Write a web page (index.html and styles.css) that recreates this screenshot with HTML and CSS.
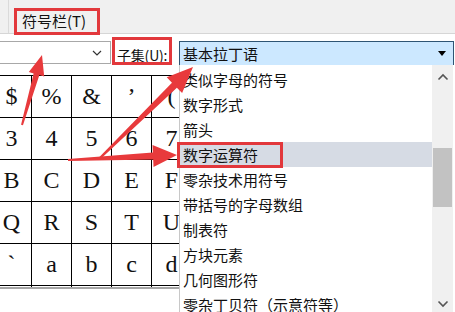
FILE: index.html
```html
<!DOCTYPE html>
<html lang="zh">
<head>
<meta charset="utf-8">
<link rel="stylesheet" href="styles.css">
</head>
<body>
<div class="page">
  <div class="tabbar">
    <div class="tab">符号栏(T)</div>
  </div>
  <div class="toolbar">
    <div class="font-select">
      <svg class="chev" width="10" height="6" viewBox="0 0 10 6"><polyline points="1,1 5,5 9,1" fill="none" stroke="#333" stroke-width="1.2"/></svg>
    </div>
    <div class="subset-label">子集(U):</div>
    <div class="subset-select">
      <span>基本拉丁语</span>
      <svg class="tri" width="8" height="5" viewBox="0 0 8 5"><polygon points="0,0 8,0 4,5" fill="#000"/></svg>
    </div>
  </div>
  <div class="grid-wrap">
    <div class="grid">
      <div class="cell">$</div><div class="cell">%</div><div class="cell">&amp;</div><div class="cell">’</div><div class="cell">(</div><div class="cell"></div>
      <div class="cell">3</div><div class="cell">4</div><div class="cell">5</div><div class="cell">6</div><div class="cell">7</div><div class="cell"></div>
      <div class="cell">B</div><div class="cell">C</div><div class="cell">D</div><div class="cell">E</div><div class="cell">F</div><div class="cell"></div>
      <div class="cell">Q</div><div class="cell">R</div><div class="cell">S</div><div class="cell">T</div><div class="cell">U</div><div class="cell"></div>
      <div class="cell">`</div><div class="cell">a</div><div class="cell">b</div><div class="cell">c</div><div class="cell">d</div><div class="cell"></div>
      <div class="cell"></div><div class="cell"></div><div class="cell"></div><div class="cell"></div><div class="cell"></div><div class="cell"></div>
    </div>
  </div>

  <div class="dropdown">
    <ul class="items">
      <li>类似字母的符号</li>
      <li>数字形式</li>
      <li>箭头</li>
      <li class="active">数字运算符</li>
      <li>零杂技术用符号</li>
      <li>带括号的字母数组</li>
      <li>制表符</li>
      <li>方块元素</li>
      <li>几何图形符</li>
      <li>零杂丁贝符（示意符等）</li>
    </ul>
    <div class="scrollbar">
      <svg class="sb-up" width="12" height="8" viewBox="0 0 12 8"><polyline points="1.5,6.5 6,2 10.5,6.5" fill="none" stroke="#555" stroke-width="1.6"/></svg>
      <div class="thumb"></div>
      <svg class="sb-down" width="12" height="8" viewBox="0 0 12 8"><polyline points="1.5,1.5 6,6 10.5,1.5" fill="none" stroke="#555" stroke-width="1.6"/></svg>
    </div>
  </div>

  <svg class="annot" width="455" height="312" viewBox="0 0 455 312">
    <g fill="none" stroke="#e2383c" stroke-width="3">
      <rect x="15.5" y="9.5" width="83" height="24"/>
      <rect x="113.5" y="38.5" width="57" height="25"/>
      <rect x="178.5" y="143.5" width="103" height="23"/>
    </g>
    <g fill="#e83a3c">
      <polygon points="21.04,124.73 33.63,73.41 28.82,72.03 42,55 44.20,76.43 39.39,75.05 22.96,125.27"/>
      <polygon points="67.95,159.0 152.87,152.60 152.53,145.11 177,155 153.53,167.09 153.19,159.60 68.05,161.0"/>
      <polygon points="99.16,157.14 171.97,82.68 166.73,77.32 193,67 182.11,93.04 176.87,87.68 100.84,158.86"/>
    </g>
  </svg>
</div>
</body>
</html>
```

FILE: styles.css
```css
* { box-sizing: border-box; }
html, body { margin: 0; padding: 0; }
body {
  width: 455px;
  height: 312px;
  overflow: hidden;
  background: #fff;
  font-family: "Noto Sans CJK SC", "Noto Sans", sans-serif;
  color: #111;
}
.page {
  position: relative;
  width: 455px;
  height: 312px;
  overflow: hidden;
}
.tabbar {
  height: 34px;
  background: #f0f0f0;
  border-bottom: 1px solid #d6d6d6;
  display: flex;
}
.tab {
  margin-left: 8px;
  border-left: 1px solid #dadada;
  padding-left: 13px;
  padding-top: 11px;
  font-size: 15px;
  line-height: 20px;
  color: #111;
}
.toolbar {
  height: 41px;
  padding-top: 7px;
  display: flex;
  align-items: flex-start;
}
.font-select {
  margin-left: -2px;
  width: 113px;
  height: 23px;
  border: 1px solid #a8a8a8;
  background: #fff;
  display: flex;
  align-items: center;
  justify-content: flex-end;
  padding-right: 8px;
}
.subset-label {
  margin-left: 6px;
  width: 62px;
  font-size: 14px;
  line-height: 20px;
  padding-top: 4px;
  white-space: nowrap;
  letter-spacing: -0.2px;
}
.subset-select {
  width: 275px;
  height: 25px;
  background: #cce8ff;
  border: 1px solid #2e5574;
  display: flex;
  align-items: center;
  justify-content: space-between;
  padding: 0 7px 0 3px;
  font-size: 15px;
}
.grid-wrap {
  height: 214px;
  border-top: 1px solid #000;
  border-bottom: 2px solid #a6a6a6;
  overflow: hidden;
}
.grid {
  margin-left: -8px;
  display: grid;
  grid-template-columns: repeat(6, 40px);
  grid-auto-rows: 42px;
}
.cell {
  border-right: 1px solid #000;
  border-bottom: 1px solid #000;
  display: flex;
  align-items: center;
  justify-content: center;
  font-family: "Liberation Serif", "DejaVu Serif", serif;
  font-size: 24px;
  color: #111;
}
.dropdown {
  position: absolute;
  left: 179px;
  top: 65px;
  width: 276px;
  height: 247px;
  background: #fff;
  border-left: 1px solid #c8c8c8;
  display: flex;
}
.items {
  list-style: none;
  margin: 0;
  padding: 2px 0 0 0;
  flex: 1;
}
.items li {
  height: 25px;
  line-height: 25px;
  padding-left: 3px;
  font-size: 15px;
  white-space: nowrap;
  color: #111;
}
.items li.active {
  background: #d6dbe4;
  margin-left: -2px;
  padding-left: 5px;
}
.scrollbar {
  width: 21px;
  margin-right: 2px;
  background: #f0f0f0;
  position: relative;
  display: flex;
  flex-direction: column;
  align-items: center;
}
.sb-up { margin-top: 8px; }
.thumb {
  width: 19px;
  height: 59px;
  margin-top: 67px;
  background: #c2c2c2;
}
.sb-down { margin-top: auto; margin-bottom: 4px; }
.annot {
  position: absolute;
  left: 0;
  top: 0;
  pointer-events: none;
}
```
